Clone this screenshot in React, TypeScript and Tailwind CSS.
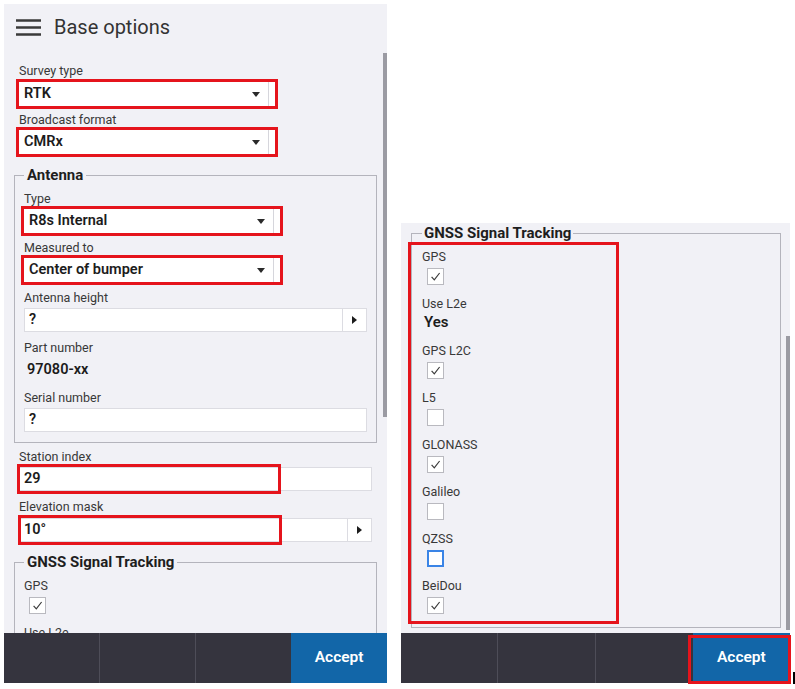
import React from 'react';

type Signal = { name: string; checked?: boolean; focused?: boolean; value?: string };

const signals: Signal[] = [
  { name: 'GPS', checked: true },
  { name: 'Use L2e', value: 'Yes' },
  { name: 'GPS L2C', checked: true },
  { name: 'L5' },
  { name: 'GLONASS', checked: true },
  { name: 'Galileo' },
  { name: 'QZSS', focused: true },
  { name: 'BeiDou', checked: true },
];

// red callout frame drawn over a control
const Highlight = ({ className }: { className: string }) => (
  <span className={`pointer-events-none absolute border-[3px] border-[#e5141c] ${className}`} />
);

const FieldLabel = ({ children, className = '' }: { children: React.ReactNode; className?: string }) => (
  <div className={`text-[12.5px] leading-[14px] text-[#383838] ${className}`}>{children}</div>
);

const Dropdown = ({ value, className = '' }: { value: string; className?: string }) => (
  <div className={`relative flex h-[24px] w-[256px] bg-white ${className}`}>
    <div className="flex flex-1 items-center pl-[5px] pr-[8px]">
      <span className="flex-1 text-[14.5px] font-semibold text-[#1c1c1c]">{value}</span>
      <svg width="8" height="5" viewBox="0 0 8 5">
        <path d="M0 0h8L4 5z" fill="#2a2a2a" />
      </svg>
    </div>
    <div className="w-[7px] border-l border-[#d6d6dc]" />
    <Highlight className="-inset-[3px]" />
  </div>
);

const TextBox = ({
  value,
  stepper,
  className = '',
  children,
}: {
  value: string;
  stepper?: boolean;
  className?: string;
  children?: React.ReactNode;
}) => (
  <div className={`relative flex h-[24px] border border-[#dcdce2] bg-white ${className}`}>
    <div className="flex flex-1 items-center pl-[4px] text-[14.5px] font-semibold text-[#1c1c1c]">{value}</div>
    {stepper && (
      <div className="flex w-[24px] items-center justify-center border-l border-[#dcdce2]">
        <svg width="5" height="8" viewBox="0 0 5 8">
          <path d="M0 0l5 4-5 4z" fill="#1c1c1c" />
        </svg>
      </div>
    )}
    {children}
  </div>
);

const Checkbox = ({ checked, focused }: { checked?: boolean; focused?: boolean }) => (
  <div
    className={`ml-[5px] mt-[4px] flex h-[17px] w-[17px] items-center justify-center bg-white ${
      focused ? 'border-2 border-[#3a84e6]' : 'border border-[#b9b9bf]'
    }`}
  >
    {checked && (
      <svg width="13" height="13" viewBox="0 0 13 13">
        <path d="M2.6 6.9L5.3 9.8L10.6 3" fill="none" stroke="#3a3a3a" strokeWidth="1.2" />
      </svg>
    )}
  </div>
);

const SignalList = ({ marked }: { marked?: boolean }) => (
  <div className="relative mt-[8px] flex flex-col gap-[12px]">
    {signals.map((s) => (
      <div key={s.name}>
        <FieldLabel>{s.name}</FieldLabel>
        {s.value ? (
          <div className="ml-[2px] mt-[1px] text-[15px] font-semibold leading-[20px] text-[#1c1c1c]">{s.value}</div>
        ) : (
          <Checkbox checked={s.checked} focused={s.focused} />
        )}
      </div>
    ))}
    {marked && <Highlight className="-left-[14px] -top-[8px] -bottom-[10px] w-[211px]" />}
  </div>
);

const Group = ({
  title,
  className = '',
  legendClass = 'px-[3px]',
  children,
}: {
  title: string;
  className?: string;
  legendClass?: string;
  children: React.ReactNode;
}) => (
  <fieldset className={`border border-[#b4b4bc] ${className}`}>
    <legend className={`text-[15px] font-bold leading-[18px] text-[#1e1e1e] ${legendClass}`}>{title}</legend>
    {children}
  </fieldset>
);

const Footer = ({ marked }: { marked?: boolean }) => (
  <div className="grid h-[50px] shrink-0 grid-cols-4 bg-[#35343e]">
    <div className="border-r border-[#4e4d58]" />
    <div className="border-r border-[#4e4d58]" />
    <div />
    <div className="relative flex items-center justify-center bg-[#1266a8] text-[15.5px] font-semibold text-white">
      Accept
      {marked && <Highlight className="-left-[5px] top-[2px] -right-[1px] -bottom-[1px]" />}
    </div>
  </div>
);

const ScrollTrack = ({ thumbClass }: { thumbClass: string }) => (
  <div className="w-[4px] shrink-0">
    <div className={`w-[4px] bg-[#9b9ba3] ${thumbClass}`} />
  </div>
);

const BaseOptions = () => (
  <div className="flex h-[679px] w-[383px] flex-col bg-[#f1f1f6]">
    <div className="flex h-[46px] shrink-0 items-center pl-[12px]">
      <svg width="25" height="17" viewBox="0 0 25 17">
        <path d="M0 1.5h25M0 8.5h25M0 15.5h25" stroke="#3a3a3a" strokeWidth="2.4" />
      </svg>
      <span className="ml-[13px] text-[20px] leading-[24px] text-[#333]">Base options</span>
    </div>
    <div className="flex min-h-0 flex-1">
      <div className="min-w-0 flex-1 overflow-hidden pl-[10px] pr-[6px] pt-[14px]">
        <FieldLabel className="ml-[5px]">Survey type</FieldLabel>
        <Dropdown value="RTK" className="ml-[5px] mt-[4px]" />
        <FieldLabel className="ml-[5px] mt-[7px]">Broadcast format</FieldLabel>
        <Dropdown value="CMRx" className="ml-[5px] mt-[3px]" />

        <Group title="Antenna" className="mt-[12px] px-[9px] pb-[10px]">
          <FieldLabel className="mt-[8px]">Type</FieldLabel>
          <Dropdown value="R8s Internal" className="mt-[3px]" />
          <FieldLabel className="mt-[8px]">Measured to</FieldLabel>
          <Dropdown value="Center of bumper" className="mt-[3px]" />
          <FieldLabel className="mt-[9px]">Antenna height</FieldLabel>
          <TextBox value="?" stepper className="mt-[3px]" />
          <FieldLabel className="mt-[9px]">Part number</FieldLabel>
          <div className="ml-[3px] mt-[6px] text-[14.5px] font-semibold leading-[18px] text-[#1c1c1c]">97080-xx</div>
          <FieldLabel className="mt-[12px]">Serial number</FieldLabel>
          <TextBox value="?" className="mt-[3px]" />
        </Group>

        <FieldLabel className="ml-[5px] mt-[7px]">Station index</FieldLabel>
        <TextBox value="29" className="mx-[5px] mt-[3px]">
          <Highlight className="-left-[3px] -top-[4px] -bottom-[4px] w-[264px]" />
        </TextBox>
        <FieldLabel className="ml-[5px] mt-[9px]">Elevation mask</FieldLabel>
        <TextBox value="10°" stepper className="mx-[5px] mt-[4px]">
          <Highlight className="-left-[2px] -top-[4px] -bottom-[4px] w-[264px]" />
        </TextBox>

        <Group title="GNSS Signal Tracking" className="mt-[11px] px-[9px] pb-[13px]">
          <SignalList />
        </Group>
      </div>
      <ScrollTrack thumbClass="mt-[3px] h-[364px]" />
    </div>
    <Footer />
  </div>
);

const SignalTracking = () => (
  <div className="ml-[14px] mt-[219px] flex h-[460px] w-[389px] flex-col bg-[#f1f1f6]">
    <div className="flex min-h-0 flex-1">
      <div className="min-w-0 flex-1 overflow-hidden pl-[10px] pr-[5px] pt-[1px]">
        <Group title="GNSS Signal Tracking" className="px-[10px] pb-[13px]" legendClass="px-[2px]">
          <SignalList marked />
        </Group>
      </div>
      <ScrollTrack thumbClass="mt-[113px] h-[294px]" />
    </div>
    <Footer marked />
  </div>
);

export default function App() {
  return (
    <div className="flex h-[689px] w-[795px] items-start bg-white pl-[4px] pt-[4px] font-['Roboto','Liberation_Sans',sans-serif]">
      <BaseOptions />
      <SignalTracking />
      <div className="ml-[3px] mt-[668px] h-[12px] w-[2px] shrink-0 bg-black" />
    </div>
  );
}
